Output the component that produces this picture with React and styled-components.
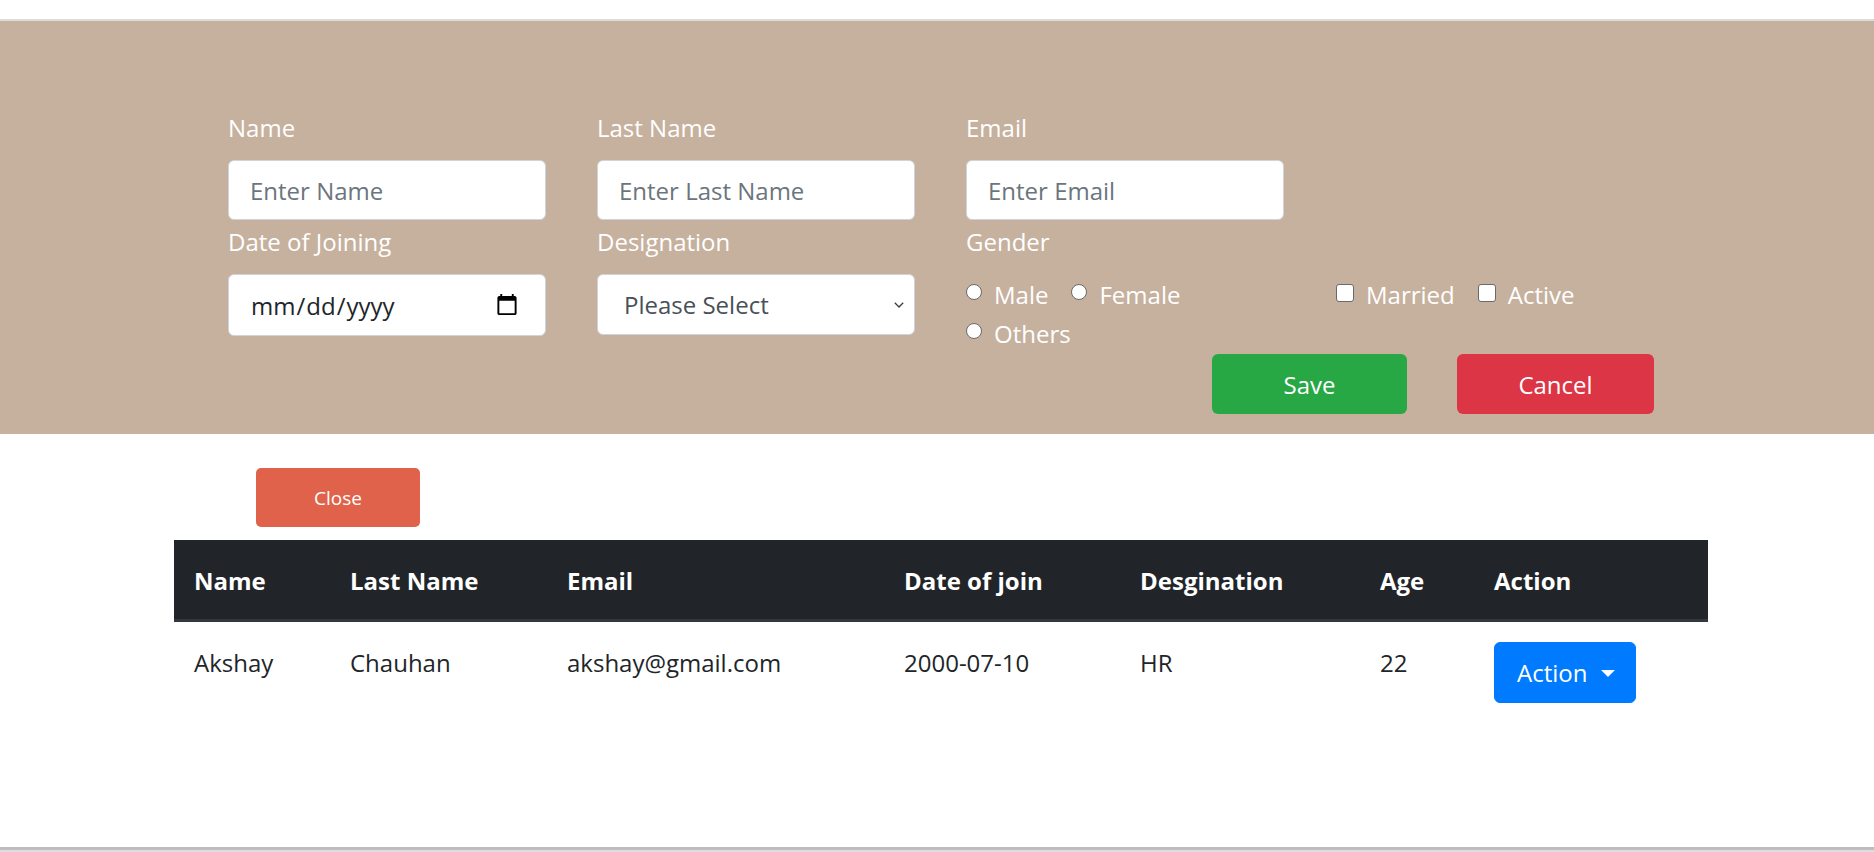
import React from 'react';
import styled, { createGlobalStyle } from 'styled-components';

const GlobalStyle = createGlobalStyle`
  html, body {
    margin: 0;
    padding: 0;
    background: #ffffff;
    font-family: "Open Sans", "Liberation Sans", sans-serif;
    color: #212529;
  }
  * { box-sizing: border-box; }
`;

const employees = [
  { name: 'Akshay', lastName: 'Chauhan', email: 'akshay@gmail.com', doj: '2000-07-10', designation: 'HR', age: 22 },
];

const columns = [
  { title: 'Name', width: 156 },
  { title: 'Last Name', width: 217 },
  { title: 'Email', width: 337 },
  { title: 'Date of join', width: 236 },
  { title: 'Desgination', width: 240 },
  { title: 'Age', width: 114 },
  { title: 'Action', width: 234 },
];

function App() {
  return (
    <Page>
      <GlobalStyle />
      <TopStrip />
      <FormPanel>
        <FormGrid>
          <Field>
            <Label>Name</Label>
            <TextInput type="text" placeholder="Enter Name" />
          </Field>
          <Field>
            <Label>Last Name</Label>
            <TextInput type="text" placeholder="Enter Last Name" />
          </Field>
          <Field>
            <Label>Email</Label>
            <TextInput type="email" placeholder="Enter Email" />
          </Field>
          <Spacer />

          <Field>
            <Label>Date of Joining</Label>
            <DateInput type="date" />
          </Field>
          <Field>
            <Label>Designation</Label>
            <SelectWrap>
              <Select defaultValue="">
                <option value="">Please Select</option>
                <option value="HR">HR</option>
                <option value="Developer">Developer</option>
                <option value="Manager">Manager</option>
              </Select>
              <Chevron width="10" height="6" viewBox="0 0 10 6">
                <path d="M0.8 0.8 L5 5 L9.2 0.8" fill="none" stroke="#3c3c3c" strokeWidth="1.3" />
              </Chevron>
            </SelectWrap>
          </Field>
          <Field>
            <Label>Gender</Label>
            <ChoiceGroup>
              <Choice><Radio type="radio" name="gender" />Male</Choice>
              <Choice><Radio type="radio" name="gender" />Female</Choice>
              <Choice><Radio type="radio" name="gender" />Others</Choice>
            </ChoiceGroup>
          </Field>
          <FlagGroup>
            <Choice><Check type="checkbox" />Married</Choice>
            <Choice><Check type="checkbox" />Active</Choice>
          </FlagGroup>

          <ButtonRow>
            <FormButton $bg="#28a745" $w={195}>Save</FormButton>
            <FormButton $bg="#dc3545" $w={197}>Cancel</FormButton>
          </ButtonRow>
        </FormGrid>
      </FormPanel>

      <ListSection>
        <CloseButton>Close</CloseButton>
        <Table>
          <colgroup>
            {columns.map((c) => <Col key={c.title} $w={c.width} />)}
          </colgroup>
          <thead>
            <tr>
              {columns.map((c) => <Th key={c.title}>{c.title}</Th>)}
            </tr>
          </thead>
          <tbody>
            {employees.map((e) => (
              <tr key={e.email}>
                <Td>{e.name}</Td>
                <Td>{e.lastName}</Td>
                <Td>{e.email}</Td>
                <Td>{e.doj}</Td>
                <Td>{e.designation}</Td>
                <Td>{e.age}</Td>
                <Td $control>
                  <ActionButton>Action<Caret /></ActionButton>
                </Td>
              </tr>
            ))}
          </tbody>
        </Table>
      </ListSection>
      <BottomEdge />
    </Page>
  );
}

const Page = styled.div`
  min-height: 100vh;
  display: flex;
  flex-direction: column;
`;

const TopStrip = styled.div`
  height: 21px;
  background: #ffffff;
  border-bottom: 2px solid #dcdcdc;
`;

const FormPanel = styled.section`
  background: #c6b19e;
  padding: 89px 0 20px 228px;
`;

const FormGrid = styled.div`
  display: grid;
  grid-template-columns: 318px 318px 318px 320px;
  column-gap: 51px;
  row-gap: 4px;
  align-items: start;
`;

const Field = styled.div`
  display: flex;
  flex-direction: column;
`;

const Spacer = styled.div``;

const Label = styled.label`
  color: #ffffff;
  font-size: 24px;
  line-height: 36px;
  margin-bottom: 14px;
`;

const TextInput = styled.input`
  height: 60px;
  width: 100%;
  padding: 0 21px;
  font-family: "Open Sans", "Liberation Sans", sans-serif;
  font-size: 24px;
  color: #495057;
  background: #ffffff;
  border: 1px solid #ced4da;
  border-radius: 6px;
  outline: none;

  &::placeholder {
    color: #6c757d;
  }
`;

const DateInput = styled(TextInput)`
  height: 62px;
  padding: 0 24px 0 21px;
  color: #212529;
`;

const SelectWrap = styled.div`
  position: relative;
`;

const Select = styled.select`
  appearance: none;
  width: 100%;
  height: 61px;
  padding: 0 40px 0 26px;
  font-family: "Open Sans", "Liberation Sans", sans-serif;
  font-size: 24px;
  color: #495057;
  background: #ffffff;
  border: 1px solid #ced4da;
  border-radius: 6px;
  outline: none;
`;

const Chevron = styled.svg`
  position: absolute;
  right: 11px;
  top: 28px;
  pointer-events: none;
`;

const ChoiceGroup = styled.div`
  display: flex;
  flex-wrap: wrap;
  column-gap: 23px;
  row-gap: 3px;
  padding-top: 3px;
`;

const FlagGroup = styled(ChoiceGroup)`
  margin-top: 50px;
  padding-left: 1px;
`;

const Choice = styled.label`
  display: flex;
  align-items: center;
  color: #ffffff;
  font-size: 24px;
  line-height: 36px;
`;

const Radio = styled.input`
  appearance: none;
  flex: none;
  width: 16px;
  height: 16px;
  margin: -6px 12px 0 0;
  border: 1.5px solid #6a6a6a;
  border-radius: 50%;
  background: #ffffff;
`;

const Check = styled.input`
  appearance: none;
  flex: none;
  width: 18px;
  height: 18px;
  margin: -5px 12px 0 0;
  border: 1.5px solid #6a6a6a;
  border-radius: 3px;
  background: #ffffff;
`;

const ButtonRow = styled.div`
  grid-column: 3 / 5;
  display: flex;
  gap: 50px;
  padding-left: 246px;
  margin-top: -2px;
`;

const FormButton = styled.button`
  width: ${(p) => p.$w}px;
  height: 60px;
  font-family: "Open Sans", "Liberation Sans", sans-serif;
  font-size: 24px;
  color: #ffffff;
  background: ${(p) => p.$bg};
  border: none;
  border-radius: 6px;
`;

const ListSection = styled.section`
  padding: 34px 0 0 174px;
`;

const CloseButton = styled.button`
  display: block;
  width: 164px;
  height: 59px;
  margin: 0 0 13px 82px;
  font-family: "Open Sans", "Liberation Sans", sans-serif;
  font-size: 19px;
  color: #ffffff;
  background: #e0624a;
  border: none;
  border-radius: 5px;
`;

const Table = styled.table`
  width: 1534px;
  table-layout: fixed;
  border-collapse: collapse;
  font-size: 24px;
  line-height: 36px;
`;

const Col = styled.col`
  width: ${(p) => p.$w}px;
`;

const Th = styled.th`
  padding: 23px 20px 20px;
  text-align: left;
  font-weight: 700;
  color: #ffffff;
  background: #212529;
  border-bottom: 3px solid #32383e;
`;

const Td = styled.td`
  padding: ${(p) => (p.$control ? '20px' : '23px 20px 20px')};
  vertical-align: top;
  color: #212529;
`;

const ActionButton = styled.button`
  display: inline-flex;
  align-items: center;
  padding: 12px 20px 11px 22px;
  font-family: "Open Sans", "Liberation Sans", sans-serif;
  font-size: 24px;
  line-height: 36px;
  color: #ffffff;
  background: #007bff;
  border: 1px solid #007bff;
  border-radius: 6px;
`;

const Caret = styled.span`
  display: inline-block;
  margin-left: 14px;
  border-top: 7px solid #ffffff;
  border-left: 7px solid transparent;
  border-right: 7px solid transparent;
`;

const BottomEdge = styled.div`
  margin-top: auto;
  height: 5px;
  border-top: 3px solid #bdbdbd;
  background: #dcdce4;
`;

export default App;
